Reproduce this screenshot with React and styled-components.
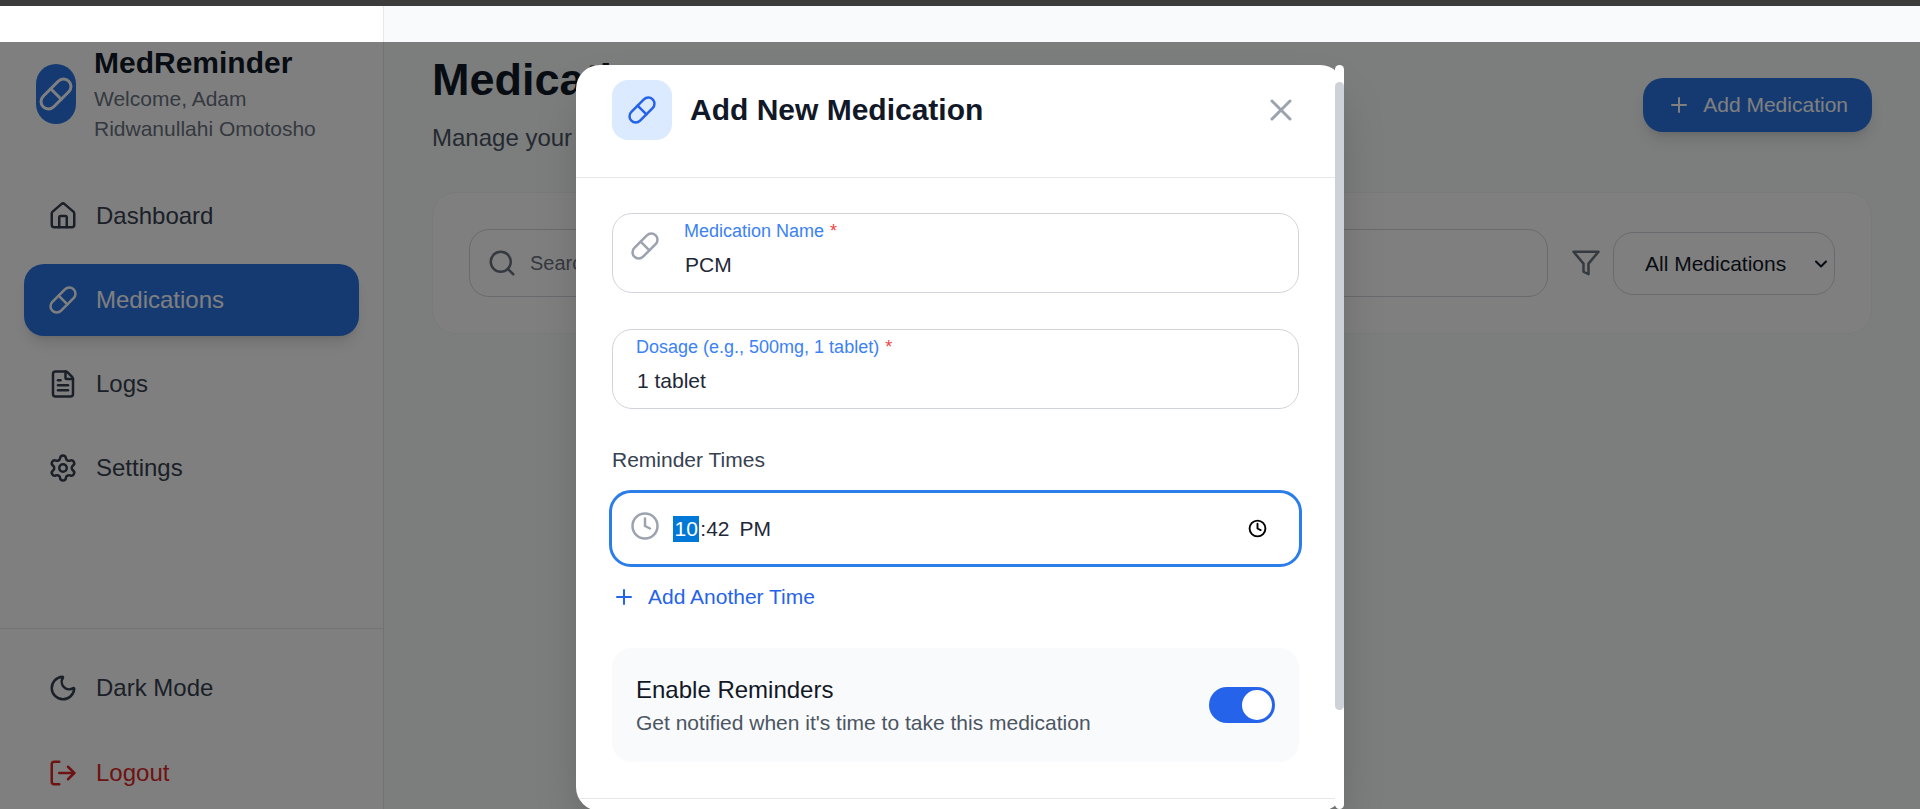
import React from 'react'
import styled, { createGlobalStyle } from 'styled-components'
import { House, Pill, FileText, Settings, Moon, LogOut, Search, ChevronDown, Plus, X, Clock } from 'lucide-react'

const brandBlue = '#2a74e4'

const GlobalStyle = createGlobalStyle`
  * { box-sizing: border-box; }
  html, body { margin: 0; height: 100%; overflow: hidden; }
  body { font-family: "Liberation Sans", Arial, sans-serif; background: #f9fafb; }
`

const Page = styled.div`
  position: relative;
  height: 100vh;
  overflow: hidden;
  display: flex;
  flex-direction: column;
`

const TopBar = styled.div`
  height: 6px;
  flex: none;
  background: #3c3c3c;
`

const Shell = styled.div`
  flex: 1;
  display: flex;
  min-height: 0;
`

const Sidebar = styled.aside`
  width: 384px;
  flex: none;
  display: flex;
  flex-direction: column;
  background: #fff;
  border-right: 1px solid #e5e7eb;
`

const Brand = styled.div`
  display: flex;
  align-items: center;
  gap: 18px;
  padding: 39px 24px 0 36px;
`

const BrandText = styled.div`
  width: 240px;
`

const Logo = styled.div`
  width: 40px;
  height: 60px;
  flex: none;
  margin-top: -2px;
  display: flex;
  align-items: center;
  justify-content: center;
  border-radius: 20px;
  background: ${brandBlue};
  color: #fff;
`

const BrandName = styled.div`
  font-size: 30px;
  line-height: 36px;
  font-weight: 700;
  color: #111827;
`

const Welcome = styled.div`
  margin-top: 3px;
  font-size: 21px;
  line-height: 30px;
  color: #6b7280;
`

const Nav = styled.nav`
  display: flex;
  flex-direction: column;
  gap: 12px;
  padding: 36px 24px 0;
`

const NavItem = styled.a`
  height: 72px;
  display: flex;
  align-items: center;
  gap: 18px;
  padding: 0 24px;
  border-radius: 20px;
  font-size: 24px;
  color: ${p => (p.$active ? '#fff' : p.$danger ? '#dc2626' : '#374151')};
  background: ${p => (p.$active ? brandBlue : 'transparent')};
  box-shadow: ${p => (p.$active ? '0 10px 15px -3px rgba(0,0,0,.12), 0 4px 6px -4px rgba(0,0,0,.12)' : 'none')};
`

const SidebarFoot = styled.div`
  margin-top: auto;
  display: flex;
  flex-direction: column;
  gap: 13px;
  padding: 23px 24px 0;
  border-top: 1px solid #e5e7eb;
`

const Main = styled.main`
  flex: 1;
  min-width: 0;
  padding: 46px 48px 0;
`

const PageHead = styled.header`
  display: flex;
  justify-content: space-between;
  align-items: flex-start;
  margin-bottom: 38px;
`

const Title = styled.h1`
  margin: 0 0 14px;
  font-size: 45px;
  line-height: 56px;
  font-weight: 700;
  color: #111827;
`

const Subtitle = styled.p`
  margin: 0;
  font-size: 24px;
  line-height: 32px;
  color: #4b5563;
`

const AddButton = styled.button`
  margin-top: 26px;
  height: 54px;
  display: flex;
  align-items: center;
  gap: 12px;
  padding: 0 24px;
  border: 0;
  border-radius: 20px;
  font: inherit;
  font-size: 21px;
  color: #fff;
  background: ${brandBlue};
  box-shadow: 0 10px 15px -3px rgba(0,0,0,.12), 0 4px 6px -4px rgba(0,0,0,.12);
`

const FilterCard = styled.section`
  height: 142px;
  display: flex;
  align-items: center;
  padding: 0 36px;
  border: 1px solid #f3f4f6;
  border-radius: 24px;
  background: #fff;
`

const SearchBox = styled.div`
  flex: 1;
  height: 68px;
  display: flex;
  align-items: center;
  gap: 13px;
  padding: 0 17px;
  border: 1px solid #d1d5db;
  border-radius: 20px;
  color: #6b7280;
`

const SearchInput = styled.input`
  flex: 1;
  padding: 0;
  border: 0;
  outline: 0;
  background: none;
  font: inherit;
  font-size: 20px;
  &::placeholder { color: #6b7280; }
`

const FilterIcon = styled.svg`
  flex: none;
  margin: 0 12px 0 23px;
  fill: none;
  stroke: #6b7280;
  stroke-width: 2;
`

const SelectWrap = styled.div`
  position: relative;
  width: 222px;
  height: 63px;
  flex: none;
  color: #111827;
`

const SelectBox = styled.select`
  appearance: none;
  width: 100%;
  height: 100%;
  padding: 0 30px 0 31px;
  border: 1px solid #d1d5db;
  border-radius: 20px;
  background: #fff;
  font: inherit;
  font-size: 21px;
  color: #111827;
`

const SelectArrow = styled(ChevronDown)`
  position: absolute;
  top: 22px;
  right: 4px;
  pointer-events: none;
`

const Overlay = styled.div`
  position: absolute;
  inset: 42px 0 0 0;
  display: flex;
  justify-content: center;
  align-items: flex-start;
  padding-top: 23px;
  background: rgba(0, 0, 0, .5);
`

const Modal = styled.div`
  position: relative;
  width: 768px;
  height: 746px;
  flex: none;
  border-radius: 24px;
  background: #fff;
  box-shadow: 0 25px 50px -12px rgba(0, 0, 0, .25);
`

const ModalInner = styled.div`
  height: 100%;
  padding-right: 9px;
  border-radius: 24px;
  overflow: hidden;
`

const ScrollTrack = styled.div`
  position: absolute;
  top: 0;
  right: 0;
  bottom: 2px;
  width: 9px;
  border-radius: 5px;
  background: #fff;
`

const ScrollThumb = styled.div`
  margin-top: 17px;
  height: 628px;
  border-radius: 5px;
  background: #cdd1d8;
`

const ModalHead = styled.div`
  height: 113px;
  display: flex;
  align-items: flex-start;
  gap: 18px;
  padding: 15px 36px 0;
  border-bottom: 1px solid #e5e7eb;
`

const IconTile = styled.div`
  width: 60px;
  height: 60px;
  flex: none;
  display: flex;
  align-items: center;
  justify-content: center;
  border-radius: 16px;
  background: #dbeafe;
  color: #2563eb;
`

const ModalTitle = styled.h2`
  flex: 1;
  margin: 0;
  font-size: 30px;
  line-height: 60px;
  font-weight: 700;
  color: #111827;
`

const CloseIcon = styled(X)`
  flex: none;
  margin-top: 12px;
  color: #9ca3af;
`

const ModalBody = styled.form`
  display: flex;
  flex-direction: column;
  padding: 35px 36px 36px;
  border-bottom: 1px solid #e5e7eb;
`

const Field = styled.div`
  height: 80px;
  display: flex;
  gap: 24px;
  margin-bottom: ${p => p.$mb || 0}px;
  padding: 5px 24px 0 ${p => (p.$withIcon ? 17 : 23)}px;
  border: 1px solid #d1d5db;
  border-radius: 20px;
  color: #9ca3af;
`

const FieldIcon = styled(Pill)`
  flex: none;
  margin-top: 12px;
`

const FieldStack = styled.div`
  flex: 1;
  display: flex;
  flex-direction: column;
  gap: 8px;
`

const FieldLabel = styled.label`
  font-size: 18px;
  line-height: 24px;
  color: #3b82f6;
`

const Required = styled.span`
  margin-left: 1px;
  color: #ef4444;
`

const FieldInput = styled.input`
  height: 28px;
  padding: 0 0 0 1px;
  border: 0;
  outline: 0;
  background: none;
  font: inherit;
  font-size: 21px;
  color: #1f2937;
`

const SectionLabel = styled.div`
  margin: 37px 0 16px;
  font-size: 21px;
  line-height: 28px;
  color: #374151;
`

const TimeBox = styled.div`
  width: 693px;
  height: 77px;
  margin-left: -3px;
  display: flex;
  align-items: center;
  padding: 0 32px 0 18px;
  border: 3px solid #2b7de9;
  border-radius: 22px;
  font-size: 21px;
  color: #1f2937;
`

const TimeIcon = styled(Clock)`
  flex: none;
  margin: -5px 13px 0 0;
  color: #9ca3af;
`

const Selected = styled.span`
  margin-right: 1px;
  padding: 0 1.5px;
  line-height: 26px;
  color: #fff;
  background: #0078d7;
`

const Meridiem = styled.span`
  margin-left: 10px;
`

const PickerIcon = styled(Clock)`
  margin-left: auto;
  color: #000;
`

const AddTime = styled.div`
  display: flex;
  align-items: center;
  gap: 12px;
  margin: 16px 0 37px;
  font-size: 21px;
  line-height: 28px;
  color: #2563eb;
`

const ReminderPanel = styled.div`
  height: 114px;
  display: flex;
  align-items: center;
  justify-content: space-between;
  padding: 0 24px;
  border-radius: 20px;
  background: #f9fafb;
`

const PanelTitle = styled.div`
  font-size: 24px;
  line-height: 32px;
  color: #111827;
`

const PanelText = styled.div`
  margin-top: 3px;
  font-size: 21px;
  line-height: 28px;
  color: #4b5563;
`

const Toggle = styled.div`
  width: 66px;
  height: 36px;
  display: flex;
  justify-content: flex-end;
  padding: 3px;
  border-radius: 18px;
  background: #2563eb;
`

const Knob = styled.div`
  width: 30px;
  height: 30px;
  border-radius: 50%;
  background: #fff;
`

export default function App() {
  return (
    <Page>
      <GlobalStyle />
      <TopBar />
      <Shell>
        <Sidebar>
          <Brand>
            <Logo><Pill size={36} /></Logo>
            <BrandText>
              <BrandName>MedReminder</BrandName>
              <Welcome>Welcome, Adam Ridwanullahi Omotosho</Welcome>
            </BrandText>
          </Brand>
          <Nav>
            <NavItem><House size={30} />Dashboard</NavItem>
            <NavItem $active><Pill size={30} />Medications</NavItem>
            <NavItem><FileText size={30} />Logs</NavItem>
            <NavItem><Settings size={30} />Settings</NavItem>
          </Nav>
          <SidebarFoot>
            <NavItem><Moon size={30} />Dark Mode</NavItem>
            <NavItem $danger><LogOut size={30} />Logout</NavItem>
          </SidebarFoot>
        </Sidebar>
        <Main>
          <PageHead>
            <div>
              <Title>Medications</Title>
              <Subtitle>Manage your medications and reminders</Subtitle>
            </div>
            <AddButton><Plus size={24} />Add Medication</AddButton>
          </PageHead>
          <FilterCard>
            <SearchBox>
              <Search size={30} />
              <SearchInput placeholder="Search medications..." readOnly />
            </SearchBox>
            <FilterIcon width="30" height="30" viewBox="0 0 24 24" strokeLinejoin="round" strokeLinecap="round">
              <polygon points="22 3 2 3 10 12.46 10 19 14 21 14 12.46 22 3" />
            </FilterIcon>
            <SelectWrap>
              <SelectBox defaultValue="all">
                <option value="all">All Medications</option>
              </SelectBox>
              <SelectArrow size={20} strokeWidth={2.5} />
            </SelectWrap>
          </FilterCard>
        </Main>
      </Shell>
      <Overlay>
        <Modal>
          <ModalInner>
            <ModalHead>
              <IconTile><Pill size={30} /></IconTile>
              <ModalTitle>Add New Medication</ModalTitle>
              <CloseIcon size={36} />
            </ModalHead>
            <ModalBody>
              <Field $withIcon $mb={36}>
                <FieldIcon size={30} />
                <FieldStack>
                  <FieldLabel>Medication Name <Required>*</Required></FieldLabel>
                  <FieldInput value="PCM" readOnly />
                </FieldStack>
              </Field>
              <Field>
                <FieldStack>
                  <FieldLabel>Dosage (e.g., 500mg, 1 tablet) <Required>*</Required></FieldLabel>
                  <FieldInput value="1 tablet" readOnly />
                </FieldStack>
              </Field>
              <SectionLabel>Reminder Times</SectionLabel>
              <TimeBox>
                <TimeIcon size={30} />
                <Selected>10</Selected>:42<Meridiem>PM</Meridiem>
                <PickerIcon size={19} strokeWidth={2.4} />
              </TimeBox>
              <AddTime><Plus size={24} />Add Another Time</AddTime>
              <ReminderPanel>
                <div>
                  <PanelTitle>Enable Reminders</PanelTitle>
                  <PanelText>Get notified when it's time to take this medication</PanelText>
                </div>
                <Toggle><Knob /></Toggle>
              </ReminderPanel>
            </ModalBody>
          </ModalInner>
          <ScrollTrack><ScrollThumb /></ScrollTrack>
        </Modal>
      </Overlay>
    </Page>
  )
}
